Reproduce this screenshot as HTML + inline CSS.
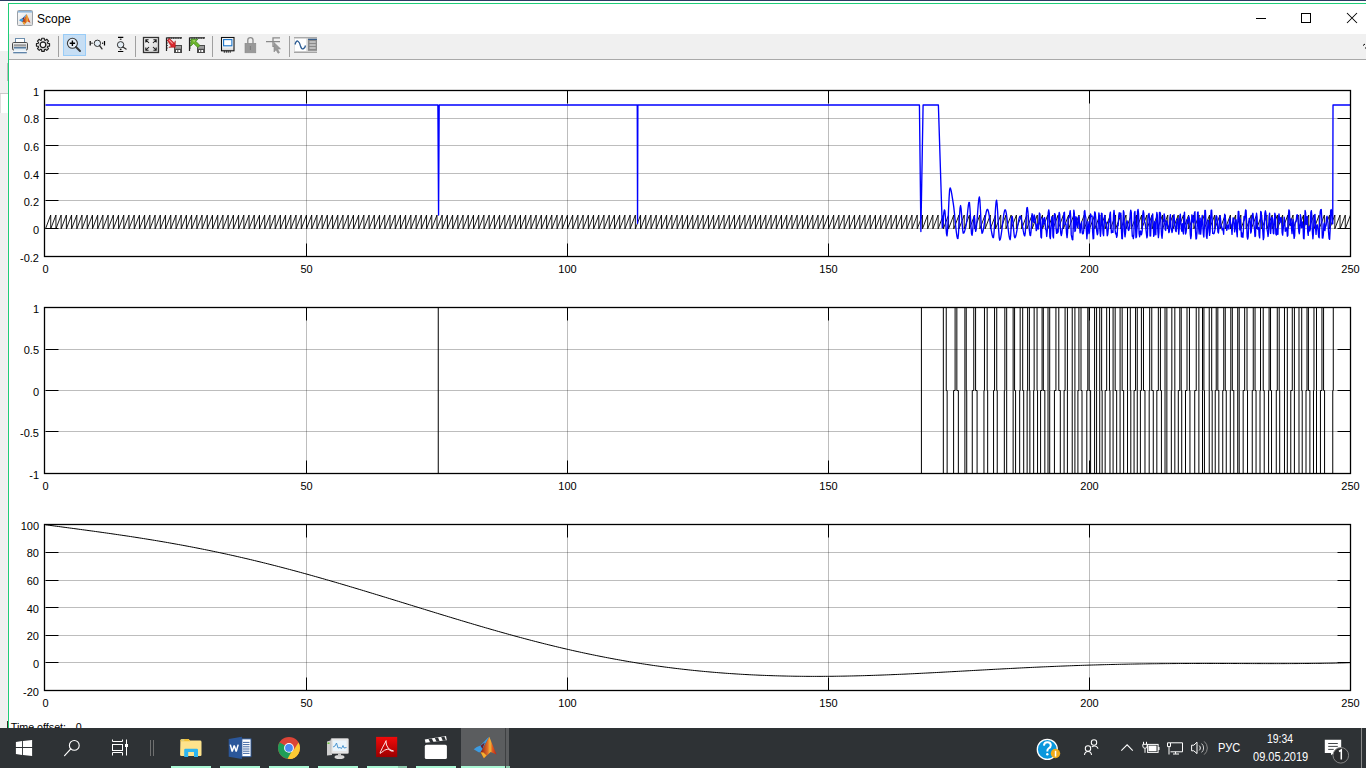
<!DOCTYPE html>
<html><head><meta charset="utf-8"><title>Scope</title>
<style>
*{margin:0;padding:0;box-sizing:border-box}
html,body{width:1366px;height:768px;overflow:hidden;background:#fff;font-family:"Liberation Sans",sans-serif;position:relative}
.abs{position:absolute}
#topstrip{left:0;top:0;width:1366px;height:1px;background:#2b3d63}
#lstrip{left:0;top:1px;width:8px;height:727px;background:#fff}
#win{left:8px;top:3px;width:1358px;height:725px;border-left:1px solid #1ecd78;border-top:1px solid #1ecd78;background:#fff}
#title{left:37px;top:12px;font-size:12px;color:#000}
#toolbar{left:9px;top:34px;width:1357px;height:26px;background:#f0f0f0;border-bottom:1px solid #a9a9a9}
.yl{position:absolute;right:1327px;font-size:11px;line-height:13px;color:#000;text-align:right;white-space:nowrap}
.xl{position:absolute;width:30px;font-size:11px;line-height:13px;color:#000;text-align:center}
#plots{position:absolute;left:0;top:0}
#toffset{left:10.8px;top:720.6px;font-size:10.7px;color:#000;white-space:pre}
#toff0{left:75.8px;top:720.6px;font-size:10.7px;color:#000}
#taskbar{left:0;top:728px;width:1366px;height:40px;background:#2e3235}
.tbtxt{position:absolute;color:#fff;font-size:12px;white-space:nowrap}
</style></head><body>
<div class="abs" id="topstrip"></div>
<div class="abs" id="lstrip">
 <div class="abs" style="left:0;top:50px;width:8px;height:42px;background:#f0f0f0"></div>
 <div class="abs" style="left:7px;top:62px;width:1px;height:18px;background:#bbb"></div>
 <div class="abs" style="left:0;top:92px;width:8px;height:1px;background:#c9c9c9"></div>
 <div class="abs" style="left:0;top:93px;width:1px;height:19px;background:#ddd"></div>
 <div class="abs" style="left:0;top:112px;width:8px;height:616px;background:#f0f0f0"></div>
 <div class="abs" style="left:7px;top:112px;width:1px;height:616px;background:#fbeff4"></div>
</div>
<div class="abs" id="win"></div>
<div class="abs" id="title">Scope</div>
<div class="abs" id="toolbar"></div>
<svg id="plots" width="1366" height="728" viewBox="0 0 1366 728">
<rect x="306" y="90.5" width="1" height="166.0" fill="#000" fill-opacity="0.26"/>
<rect x="567" y="90.5" width="1" height="166.0" fill="#000" fill-opacity="0.26"/>
<rect x="828" y="90.5" width="1" height="166.0" fill="#000" fill-opacity="0.26"/>
<rect x="1089" y="90.5" width="1" height="166.0" fill="#000" fill-opacity="0.26"/>
<rect x="45.5" y="118" width="1305.0" height="1" fill="#000" fill-opacity="0.26"/>
<rect x="45.5" y="145" width="1305.0" height="1" fill="#000" fill-opacity="0.26"/>
<rect x="45.5" y="173" width="1305.0" height="1" fill="#000" fill-opacity="0.26"/>
<rect x="45.5" y="200" width="1305.0" height="1" fill="#000" fill-opacity="0.26"/>
<rect x="45.5" y="228" width="1305.0" height="1" fill="#000" fill-opacity="0.26"/>
<path d="M306.5,90.5 V103.5 M306.5,256.5 V243.5 M567.5,90.5 V103.5 M567.5,256.5 V243.5 M828.5,90.5 V103.5 M828.5,256.5 V243.5 M1089.5,90.5 V103.5 M1089.5,256.5 V243.5 M45.5,118.5 H58.5 M1350.5,118.5 H1337.5 M45.5,145.5 H58.5 M1350.5,145.5 H1337.5 M45.5,173.5 H58.5 M1350.5,173.5 H1337.5 M45.5,200.5 H58.5 M1350.5,200.5 H1337.5 M45.5,228.5 H58.5 M1350.5,228.5 H1337.5" stroke="#000" stroke-width="1" fill="none"/>
<rect x="306" y="307.5" width="1" height="166.0" fill="#000" fill-opacity="0.26"/>
<rect x="567" y="307.5" width="1" height="166.0" fill="#000" fill-opacity="0.26"/>
<rect x="828" y="307.5" width="1" height="166.0" fill="#000" fill-opacity="0.26"/>
<rect x="1089" y="307.5" width="1" height="166.0" fill="#000" fill-opacity="0.26"/>
<rect x="45.5" y="349" width="1305.0" height="1" fill="#000" fill-opacity="0.26"/>
<rect x="45.5" y="390" width="1305.0" height="1" fill="#000" fill-opacity="0.26"/>
<rect x="45.5" y="431" width="1305.0" height="1" fill="#000" fill-opacity="0.26"/>
<path d="M306.5,307.5 V320.5 M306.5,473.5 V460.5 M567.5,307.5 V320.5 M567.5,473.5 V460.5 M828.5,307.5 V320.5 M828.5,473.5 V460.5 M1089.5,307.5 V320.5 M1089.5,473.5 V460.5 M45.5,349.5 H58.5 M1350.5,349.5 H1337.5 M45.5,390.5 H58.5 M1350.5,390.5 H1337.5 M45.5,431.5 H58.5 M1350.5,431.5 H1337.5" stroke="#000" stroke-width="1" fill="none"/>
<rect x="306" y="524.5" width="1" height="166.0" fill="#000" fill-opacity="0.26"/>
<rect x="567" y="524.5" width="1" height="166.0" fill="#000" fill-opacity="0.26"/>
<rect x="828" y="524.5" width="1" height="166.0" fill="#000" fill-opacity="0.26"/>
<rect x="1089" y="524.5" width="1" height="166.0" fill="#000" fill-opacity="0.26"/>
<rect x="45.5" y="552" width="1305.0" height="1" fill="#000" fill-opacity="0.26"/>
<rect x="45.5" y="580" width="1305.0" height="1" fill="#000" fill-opacity="0.26"/>
<rect x="45.5" y="607" width="1305.0" height="1" fill="#000" fill-opacity="0.26"/>
<rect x="45.5" y="635" width="1305.0" height="1" fill="#000" fill-opacity="0.26"/>
<rect x="45.5" y="662" width="1305.0" height="1" fill="#000" fill-opacity="0.26"/>
<path d="M306.5,524.5 V537.5 M306.5,690.5 V677.5 M567.5,524.5 V537.5 M567.5,690.5 V677.5 M828.5,524.5 V537.5 M828.5,690.5 V677.5 M1089.5,524.5 V537.5 M1089.5,690.5 V677.5 M45.5,552.5 H58.5 M1350.5,552.5 H1337.5 M45.5,580.5 H58.5 M1350.5,580.5 H1337.5 M45.5,607.5 H58.5 M1350.5,607.5 H1337.5 M45.5,635.5 H58.5 M1350.5,635.5 H1337.5 M45.5,662.5 H58.5 M1350.5,662.5 H1337.5" stroke="#000" stroke-width="1" fill="none"/>
<path d="M45.50,228.83 L50.71,215.00 L50.72,228.83 L55.93,215.00 L55.94,228.83 L61.15,215.00 L61.16,228.83 L66.37,215.00 L66.38,228.83 L71.59,215.00 L71.60,228.83 L76.81,215.00 L76.82,228.83 L82.03,215.00 L82.04,228.83 L87.25,215.00 L87.26,228.83 L92.47,215.00 L92.48,228.83 L97.69,215.00 L97.70,228.83 L102.91,215.00 L102.92,228.83 L108.13,215.00 L108.14,228.83 L113.35,215.00 L113.36,228.83 L118.57,215.00 L118.58,228.83 L123.79,215.00 L123.80,228.83 L129.01,215.00 L129.02,228.83 L134.23,215.00 L134.24,228.83 L139.45,215.00 L139.46,228.83 L144.67,215.00 L144.68,228.83 L149.89,215.00 L149.90,228.83 L155.11,215.00 L155.12,228.83 L160.33,215.00 L160.34,228.83 L165.55,215.00 L165.56,228.83 L170.77,215.00 L170.78,228.83 L175.99,215.00 L176.00,228.83 L181.21,215.00 L181.22,228.83 L186.43,215.00 L186.44,228.83 L191.65,215.00 L191.66,228.83 L196.87,215.00 L196.88,228.83 L202.09,215.00 L202.10,228.83 L207.31,215.00 L207.32,228.83 L212.53,215.00 L212.54,228.83 L217.75,215.00 L217.76,228.83 L222.97,215.00 L222.98,228.83 L228.19,215.00 L228.20,228.83 L233.41,215.00 L233.42,228.83 L238.63,215.00 L238.64,228.83 L243.85,215.00 L243.86,228.83 L249.07,215.00 L249.08,228.83 L254.29,215.00 L254.30,228.83 L259.51,215.00 L259.52,228.83 L264.73,215.00 L264.74,228.83 L269.95,215.00 L269.96,228.83 L275.17,215.00 L275.18,228.83 L280.39,215.00 L280.40,228.83 L285.61,215.00 L285.62,228.83 L290.83,215.00 L290.84,228.83 L296.05,215.00 L296.06,228.83 L301.27,215.00 L301.28,228.83 L306.49,215.00 L306.50,228.83 L311.71,215.00 L311.72,228.83 L316.93,215.00 L316.94,228.83 L322.15,215.00 L322.16,228.83 L327.37,215.00 L327.38,228.83 L332.59,215.00 L332.60,228.83 L337.81,215.00 L337.82,228.83 L343.03,215.00 L343.04,228.83 L348.25,215.00 L348.26,228.83 L353.47,215.00 L353.48,228.83 L358.69,215.00 L358.70,228.83 L363.91,215.00 L363.92,228.83 L369.13,215.00 L369.14,228.83 L374.35,215.00 L374.36,228.83 L379.57,215.00 L379.58,228.83 L384.79,215.00 L384.80,228.83 L390.01,215.00 L390.02,228.83 L395.23,215.00 L395.24,228.83 L400.45,215.00 L400.46,228.83 L405.67,215.00 L405.68,228.83 L410.89,215.00 L410.90,228.83 L416.11,215.00 L416.12,228.83 L421.33,215.00 L421.34,228.83 L426.55,215.00 L426.56,228.83 L431.77,215.00 L431.78,228.83 L436.99,215.00 L437.00,228.83 L442.21,215.00 L442.22,228.83 L447.43,215.00 L447.44,228.83 L452.65,215.00 L452.66,228.83 L457.87,215.00 L457.88,228.83 L463.09,215.00 L463.10,228.83 L468.31,215.00 L468.32,228.83 L473.53,215.00 L473.54,228.83 L478.75,215.00 L478.76,228.83 L483.97,215.00 L483.98,228.83 L489.19,215.00 L489.20,228.83 L494.41,215.00 L494.42,228.83 L499.63,215.00 L499.64,228.83 L504.85,215.00 L504.86,228.83 L510.07,215.00 L510.08,228.83 L515.29,215.00 L515.30,228.83 L520.51,215.00 L520.52,228.83 L525.73,215.00 L525.74,228.83 L530.95,215.00 L530.96,228.83 L536.17,215.00 L536.18,228.83 L541.39,215.00 L541.40,228.83 L546.61,215.00 L546.62,228.83 L551.83,215.00 L551.84,228.83 L557.05,215.00 L557.06,228.83 L562.27,215.00 L562.28,228.83 L567.49,215.00 L567.50,228.83 L572.71,215.00 L572.72,228.83 L577.93,215.00 L577.94,228.83 L583.15,215.00 L583.16,228.83 L588.37,215.00 L588.38,228.83 L593.59,215.00 L593.60,228.83 L598.81,215.00 L598.82,228.83 L604.03,215.00 L604.04,228.83 L609.25,215.00 L609.26,228.83 L614.47,215.00 L614.48,228.83 L619.69,215.00 L619.70,228.83 L624.91,215.00 L624.92,228.83 L630.13,215.00 L630.14,228.83 L635.35,215.00 L635.36,228.83 L640.57,215.00 L640.58,228.83 L645.79,215.00 L645.80,228.83 L651.01,215.00 L651.02,228.83 L656.23,215.00 L656.24,228.83 L661.45,215.00 L661.46,228.83 L666.67,215.00 L666.68,228.83 L671.89,215.00 L671.90,228.83 L677.11,215.00 L677.12,228.83 L682.33,215.00 L682.34,228.83 L687.55,215.00 L687.56,228.83 L692.77,215.00 L692.78,228.83 L697.99,215.00 L698.00,228.83 L703.21,215.00 L703.22,228.83 L708.43,215.00 L708.44,228.83 L713.65,215.00 L713.66,228.83 L718.87,215.00 L718.88,228.83 L724.09,215.00 L724.10,228.83 L729.31,215.00 L729.32,228.83 L734.53,215.00 L734.54,228.83 L739.75,215.00 L739.76,228.83 L744.97,215.00 L744.98,228.83 L750.19,215.00 L750.20,228.83 L755.41,215.00 L755.42,228.83 L760.63,215.00 L760.64,228.83 L765.85,215.00 L765.86,228.83 L771.07,215.00 L771.08,228.83 L776.29,215.00 L776.30,228.83 L781.51,215.00 L781.52,228.83 L786.73,215.00 L786.74,228.83 L791.95,215.00 L791.96,228.83 L797.17,215.00 L797.18,228.83 L802.39,215.00 L802.40,228.83 L807.61,215.00 L807.62,228.83 L812.83,215.00 L812.84,228.83 L818.05,215.00 L818.06,228.83 L823.27,215.00 L823.28,228.83 L828.49,215.00 L828.50,228.83 L833.71,215.00 L833.72,228.83 L838.93,215.00 L838.94,228.83 L844.15,215.00 L844.16,228.83 L849.37,215.00 L849.38,228.83 L854.59,215.00 L854.60,228.83 L859.81,215.00 L859.82,228.83 L865.03,215.00 L865.04,228.83 L870.25,215.00 L870.26,228.83 L875.47,215.00 L875.48,228.83 L880.69,215.00 L880.70,228.83 L885.91,215.00 L885.92,228.83 L891.13,215.00 L891.14,228.83 L896.35,215.00 L896.36,228.83 L901.57,215.00 L901.58,228.83 L906.79,215.00 L906.80,228.83 L912.01,215.00 L912.02,228.83 L917.23,215.00 L917.24,228.83 L922.45,215.00 L922.46,228.83 L927.67,215.00 L927.68,228.83 L932.89,215.00 L932.90,228.83 L938.11,215.00 L938.12,228.83 L943.33,215.00 L943.34,228.83 L948.55,215.00 L948.56,228.83 L953.77,215.00 L953.78,228.83 L958.99,215.00 L959.00,228.83 L964.21,215.00 L964.22,228.83 L969.43,215.00 L969.44,228.83 L974.65,215.00 L974.66,228.83 L979.87,215.00 L979.88,228.83 L985.09,215.00 L985.10,228.83 L990.31,215.00 L990.32,228.83 L995.53,215.00 L995.54,228.83 L1000.75,215.00 L1000.76,228.83 L1005.97,215.00 L1005.98,228.83 L1011.19,215.00 L1011.20,228.83 L1016.41,215.00 L1016.42,228.83 L1021.63,215.00 L1021.64,228.83 L1026.85,215.00 L1026.86,228.83 L1032.07,215.00 L1032.08,228.83 L1037.29,215.00 L1037.30,228.83 L1042.51,215.00 L1042.52,228.83 L1047.73,215.00 L1047.74,228.83 L1052.95,215.00 L1052.96,228.83 L1058.17,215.00 L1058.18,228.83 L1063.39,215.00 L1063.40,228.83 L1068.61,215.00 L1068.62,228.83 L1073.83,215.00 L1073.84,228.83 L1079.05,215.00 L1079.06,228.83 L1084.27,215.00 L1084.28,228.83 L1089.49,215.00 L1089.50,228.83 L1094.71,215.00 L1094.72,228.83 L1099.93,215.00 L1099.94,228.83 L1105.15,215.00 L1105.16,228.83 L1110.37,215.00 L1110.38,228.83 L1115.59,215.00 L1115.60,228.83 L1120.81,215.00 L1120.82,228.83 L1126.03,215.00 L1126.04,228.83 L1131.25,215.00 L1131.26,228.83 L1136.47,215.00 L1136.48,228.83 L1141.69,215.00 L1141.70,228.83 L1146.91,215.00 L1146.92,228.83 L1152.13,215.00 L1152.14,228.83 L1157.35,215.00 L1157.36,228.83 L1162.57,215.00 L1162.58,228.83 L1167.79,215.00 L1167.80,228.83 L1173.01,215.00 L1173.02,228.83 L1178.23,215.00 L1178.24,228.83 L1183.45,215.00 L1183.46,228.83 L1188.67,215.00 L1188.68,228.83 L1193.89,215.00 L1193.90,228.83 L1199.11,215.00 L1199.12,228.83 L1204.33,215.00 L1204.34,228.83 L1209.55,215.00 L1209.56,228.83 L1214.77,215.00 L1214.78,228.83 L1219.99,215.00 L1220.00,228.83 L1225.21,215.00 L1225.22,228.83 L1230.43,215.00 L1230.44,228.83 L1235.65,215.00 L1235.66,228.83 L1240.87,215.00 L1240.88,228.83 L1246.09,215.00 L1246.10,228.83 L1251.31,215.00 L1251.32,228.83 L1256.53,215.00 L1256.54,228.83 L1261.75,215.00 L1261.76,228.83 L1266.97,215.00 L1266.98,228.83 L1272.19,215.00 L1272.20,228.83 L1277.41,215.00 L1277.42,228.83 L1282.63,215.00 L1282.64,228.83 L1287.85,215.00 L1287.86,228.83 L1293.07,215.00 L1293.08,228.83 L1298.29,215.00 L1298.30,228.83 L1303.51,215.00 L1303.52,228.83 L1308.73,215.00 L1308.74,228.83 L1313.95,215.00 L1313.96,228.83 L1319.17,215.00 L1319.18,228.83 L1324.39,215.00 L1324.40,228.83 L1329.61,215.00 L1329.62,228.83 L1334.83,215.00 L1334.84,228.83 L1340.05,215.00 L1340.06,228.83 L1345.27,215.00 L1345.28,228.83 L1350.49,215.00 L1350.50,228.83" stroke="#000" stroke-width="0.9" fill="none"/>
<path d="M45.50,105.03 L437.89,105.03 L438.57,215.00 L439.19,105.03 L637.24,105.03 L637.55,223.30 L637.87,105.03 L919.43,105.03 L920.89,231.60 L923.09,105.03 L938.38,105.03 L942.30,227.90 L942.82,225.71 L943.34,217.67 L943.86,212.38 L944.38,209.84 L944.91,210.88 L945.43,217.40 L945.95,226.21 L946.47,233.60 L946.99,235.87 L947.52,231.05 L948.04,221.29 L948.56,209.34 L949.08,197.98 L949.60,189.96 L950.13,187.84 L950.65,188.81 L951.17,190.83 L951.69,193.61 L952.21,196.82 L952.74,200.16 L953.26,203.35 L953.78,207.14 L954.30,211.89 L954.82,217.19 L955.35,222.66 L955.87,227.90 L956.39,232.52 L956.91,236.12 L957.43,238.32 L957.96,238.48 L958.48,233.56 L959.00,224.92 L959.52,215.45 L960.04,208.03 L960.57,205.55 L961.09,208.67 L961.61,215.15 L962.13,222.83 L962.65,229.55 L963.18,233.14 L963.70,233.07 L964.22,232.15 L964.74,230.69 L965.26,228.86 L965.79,226.85 L966.31,224.39 L966.83,220.19 L967.35,214.96 L967.87,209.62 L968.40,205.11 L968.92,202.34 L969.44,202.65 L969.96,208.44 L970.48,217.52 L971.01,226.97 L971.53,233.86 L972.05,235.36 L972.57,231.56 L973.09,225.24 L973.62,219.15 L974.14,216.04 L974.66,219.92 L975.18,228.18 L975.70,231.43 L976.23,229.00 L976.75,223.94 L977.27,217.33 L977.79,210.25 L978.31,203.77 L978.84,198.96 L979.36,196.92 L979.88,200.17 L980.40,208.95 L980.92,219.76 L981.45,229.05 L981.97,233.29 L982.49,232.74 L983.01,231.08 L983.53,228.57 L984.06,225.48 L984.58,222.07 L985.10,218.59 L985.62,215.32 L986.14,212.51 L986.67,210.42 L987.19,209.31 L987.71,209.43 L988.23,210.75 L988.75,213.04 L989.28,216.06 L989.80,219.57 L990.32,223.33 L990.84,227.11 L991.36,230.66 L991.89,233.75 L992.41,236.13 L992.93,237.58 L993.45,237.66 L993.97,233.57 L994.50,225.98 L995.02,216.86 L995.54,208.19 L996.06,201.94 L996.58,200.08 L997.11,203.78 L997.63,211.47 L998.15,221.05 L998.67,230.42 L999.19,237.51 L999.72,240.20 L1000.24,239.38 L1000.76,237.23 L1001.28,234.06 L1001.80,230.20 L1002.33,225.94 L1002.85,221.60 L1003.37,217.51 L1003.89,213.97 L1004.41,211.30 L1004.94,209.81 L1005.46,209.84 L1005.98,211.57 L1006.50,214.66 L1007.02,218.70 L1007.55,223.26 L1008.07,227.95 L1008.59,232.35 L1009.11,236.05 L1009.63,238.63 L1010.16,239.70 L1010.68,235.58 L1011.20,225.89 L1011.72,217.52 L1012.24,216.47 L1012.77,220.02 L1013.29,225.64 L1013.81,231.63 L1014.33,236.27 L1014.85,237.90 L1015.38,237.21 L1015.90,235.56 L1016.42,233.17 L1016.94,230.30 L1017.46,227.17 L1017.99,224.03 L1018.51,221.11 L1019.03,218.64 L1019.55,216.87 L1020.07,216.04 L1020.60,216.42 L1021.12,218.07 L1021.64,220.66 L1022.16,223.81 L1022.68,227.20 L1023.21,230.46 L1023.73,233.25 L1024.25,235.21 L1024.77,236.00 L1025.29,232.55 L1025.82,223.98 L1026.34,214.37 L1026.86,207.79 L1027.38,207.54 L1027.90,211.49 L1028.43,217.75 L1028.95,224.81 L1029.47,231.15 L1029.99,235.25 L1030.51,235.58 L1031.04,231.35 L1031.56,223.65 L1032.08,213.71 L1032.60,216.03 L1033.12,220.71 L1033.65,222.37 L1034.17,214.96 L1034.69,216.55 L1035.21,219.67 L1035.73,224.31 L1036.26,230.66 L1036.78,229.38 L1037.30,224.00 L1037.82,227.85 L1038.34,229.06 L1038.87,220.90 L1039.39,213.01 L1039.91,213.97 L1040.43,224.79 L1040.95,237.21 L1041.48,237.92 L1042.00,224.40 L1042.52,217.98 L1043.04,224.71 L1043.56,223.22 L1044.09,218.76 L1044.61,217.51 L1045.13,222.43 L1045.65,229.30 L1046.17,230.22 L1046.70,236.45 L1047.22,231.24 L1047.74,220.65 L1048.26,212.40 L1048.78,209.94 L1049.31,213.28 L1049.83,236.79 L1050.35,238.67 L1050.87,229.60 L1051.39,224.76 L1051.92,216.77 L1052.44,217.00 L1052.96,236.13 L1053.48,237.93 L1054.00,222.48 L1054.53,213.68 L1055.05,213.98 L1055.57,217.13 L1056.09,228.50 L1056.61,233.39 L1057.14,229.47 L1057.66,232.72 L1058.18,231.68 L1058.70,216.10 L1059.22,212.40 L1059.75,214.72 L1060.27,226.78 L1060.79,233.50 L1061.31,235.49 L1061.83,233.39 L1062.36,228.40 L1062.88,227.90 L1063.40,220.08 L1063.92,212.66 L1064.44,212.25 L1064.97,224.43 L1065.49,223.01 L1066.01,224.54 L1066.53,233.38 L1067.05,237.69 L1067.58,232.47 L1068.10,218.58 L1068.62,217.79 L1069.14,217.84 L1069.66,213.71 L1070.19,210.68 L1070.71,216.45 L1071.23,234.64 L1071.75,237.05 L1072.27,239.59 L1072.80,239.76 L1073.32,223.58 L1073.84,210.07 L1074.36,213.38 L1074.88,231.48 L1075.41,230.65 L1075.93,216.79 L1076.45,217.95 L1076.97,224.92 L1077.49,227.71 L1078.02,223.26 L1078.54,216.31 L1079.06,216.85 L1079.58,226.30 L1080.10,232.91 L1080.63,227.98 L1081.15,224.07 L1081.67,221.92 L1082.19,232.76 L1082.71,233.85 L1083.24,233.68 L1083.76,230.16 L1084.28,211.61 L1084.80,210.52 L1085.32,215.75 L1085.85,217.59 L1086.37,230.39 L1086.89,238.75 L1087.41,232.20 L1087.93,221.55 L1088.46,225.57 L1088.98,233.67 L1089.50,232.06 L1090.02,222.17 L1090.54,213.87 L1091.07,215.49 L1091.59,216.50 L1092.11,216.04 L1092.63,231.79 L1093.15,238.84 L1093.68,238.43 L1094.20,219.02 L1094.72,211.85 L1095.24,213.09 L1095.76,218.08 L1096.29,226.68 L1096.81,231.69 L1097.33,234.72 L1097.85,233.33 L1098.37,222.30 L1098.90,212.88 L1099.42,216.68 L1099.94,230.67 L1100.46,236.30 L1100.98,229.96 L1101.51,213.21 L1102.03,213.59 L1102.55,223.18 L1103.07,233.60 L1103.59,235.71 L1104.12,224.84 L1104.64,215.37 L1105.16,219.31 L1105.68,222.84 L1106.20,222.53 L1106.73,227.93 L1107.25,235.76 L1107.77,234.34 L1108.29,228.87 L1108.81,221.15 L1109.34,222.17 L1109.86,214.39 L1110.38,212.14 L1110.90,223.87 L1111.42,232.86 L1111.95,230.92 L1112.47,232.33 L1112.99,232.39 L1113.51,215.11 L1114.03,210.33 L1114.56,216.12 L1115.08,229.80 L1115.60,233.94 L1116.12,233.10 L1116.64,237.35 L1117.17,235.61 L1117.69,224.72 L1118.21,225.57 L1118.73,215.76 L1119.25,212.63 L1119.78,217.04 L1120.30,214.97 L1120.82,213.06 L1121.34,228.30 L1121.86,238.53 L1122.39,238.71 L1122.91,224.84 L1123.43,210.78 L1123.95,212.72 L1124.47,231.51 L1125.00,236.80 L1125.52,232.84 L1126.04,224.31 L1126.56,222.18 L1127.08,220.79 L1127.61,222.93 L1128.13,229.22 L1128.65,230.47 L1129.17,229.01 L1129.69,225.46 L1130.22,213.89 L1130.74,210.12 L1131.26,212.14 L1131.78,226.67 L1132.30,236.32 L1132.83,235.79 L1133.35,238.57 L1133.87,234.70 L1134.39,213.16 L1134.91,211.38 L1135.44,224.30 L1135.96,237.75 L1136.48,236.88 L1137.00,228.37 L1137.52,211.37 L1138.05,209.47 L1138.57,213.63 L1139.09,233.52 L1139.61,236.72 L1140.13,231.44 L1140.66,231.01 L1141.18,234.82 L1141.70,233.90 L1142.22,230.66 L1142.74,214.51 L1143.27,210.79 L1143.79,212.86 L1144.31,221.34 L1144.83,222.15 L1145.35,224.35 L1145.88,228.95 L1146.40,233.75 L1146.92,237.86 L1147.44,235.39 L1147.96,218.54 L1148.49,214.54 L1149.01,213.44 L1149.53,217.94 L1150.05,236.10 L1150.57,235.97 L1151.10,224.28 L1151.62,217.98 L1152.14,216.84 L1152.66,213.86 L1153.18,222.63 L1153.71,236.39 L1154.23,234.86 L1154.75,221.73 L1155.27,227.05 L1155.79,234.74 L1156.32,218.96 L1156.84,212.46 L1157.36,215.02 L1157.88,231.08 L1158.40,237.62 L1158.93,232.57 L1159.45,212.66 L1159.97,212.29 L1160.49,214.08 L1161.01,225.93 L1161.54,235.25 L1162.06,238.24 L1162.58,232.21 L1163.10,220.00 L1163.62,221.44 L1164.15,213.89 L1164.67,216.61 L1165.19,229.71 L1165.71,230.46 L1166.23,224.77 L1166.76,220.60 L1167.28,223.40 L1167.80,226.54 L1168.32,227.54 L1168.84,232.62 L1169.37,231.43 L1169.89,217.50 L1170.41,214.72 L1170.93,227.35 L1171.45,229.72 L1171.98,232.49 L1172.50,230.77 L1173.02,219.99 L1173.54,216.81 L1174.06,214.67 L1174.59,223.18 L1175.11,226.80 L1175.63,230.82 L1176.15,231.61 L1176.67,222.81 L1177.20,219.49 L1177.72,218.53 L1178.24,227.29 L1178.76,234.18 L1179.28,228.02 L1179.81,216.46 L1180.33,214.13 L1180.85,222.55 L1181.37,229.36 L1181.89,231.22 L1182.42,223.68 L1182.94,231.41 L1183.46,233.96 L1183.98,216.42 L1184.50,212.15 L1185.03,226.43 L1185.55,234.05 L1186.07,232.39 L1186.59,227.81 L1187.11,219.75 L1187.64,223.68 L1188.16,222.23 L1188.68,216.25 L1189.20,217.97 L1189.72,221.08 L1190.25,233.84 L1190.77,238.68 L1191.29,235.52 L1191.81,214.91 L1192.33,215.92 L1192.86,221.33 L1193.38,222.75 L1193.90,220.14 L1194.42,213.18 L1194.94,211.62 L1195.47,230.20 L1195.99,238.98 L1196.51,238.53 L1197.03,231.98 L1197.55,212.75 L1198.08,211.98 L1198.60,226.73 L1199.12,233.98 L1199.64,221.54 L1200.16,218.16 L1200.69,234.12 L1201.21,228.13 L1201.73,219.80 L1202.25,215.42 L1202.77,224.75 L1203.30,233.82 L1203.82,236.98 L1204.34,227.40 L1204.86,210.48 L1205.38,210.36 L1205.91,220.09 L1206.43,236.10 L1206.95,238.39 L1207.47,231.89 L1207.99,220.56 L1208.52,220.25 L1209.04,228.47 L1209.56,235.43 L1210.08,231.91 L1210.60,219.15 L1211.13,210.42 L1211.65,210.10 L1212.17,220.03 L1212.69,233.38 L1213.21,233.12 L1213.74,233.80 L1214.26,233.12 L1214.78,230.44 L1215.30,227.88 L1215.82,217.84 L1216.35,215.60 L1216.87,216.86 L1217.39,223.23 L1217.91,231.97 L1218.43,233.09 L1218.96,227.39 L1219.48,220.88 L1220.00,215.58 L1220.52,218.75 L1221.04,227.01 L1221.57,225.90 L1222.09,229.80 L1222.61,228.37 L1223.13,230.40 L1223.65,234.28 L1224.18,221.55 L1224.70,214.20 L1225.22,216.45 L1225.74,221.70 L1226.26,227.27 L1226.79,230.36 L1227.31,227.61 L1227.83,225.01 L1228.35,225.75 L1228.87,228.97 L1229.40,221.48 L1229.92,217.99 L1230.44,222.01 L1230.96,224.61 L1231.48,228.00 L1232.01,234.44 L1232.53,225.64 L1233.05,217.91 L1233.57,218.05 L1234.09,223.22 L1234.62,231.89 L1235.14,228.89 L1235.66,219.50 L1236.18,219.91 L1236.70,231.59 L1237.23,236.77 L1237.75,222.98 L1238.27,211.36 L1238.79,211.50 L1239.31,220.74 L1239.84,229.90 L1240.36,218.92 L1240.88,226.66 L1241.40,236.80 L1241.92,232.95 L1242.45,236.33 L1242.97,237.33 L1243.49,228.45 L1244.01,216.42 L1244.53,219.87 L1245.06,215.23 L1245.58,210.02 L1246.10,210.52 L1246.62,222.48 L1247.14,236.62 L1247.67,239.07 L1248.19,236.90 L1248.71,224.45 L1249.23,218.43 L1249.75,218.38 L1250.28,221.81 L1250.80,233.10 L1251.32,231.42 L1251.84,220.27 L1252.36,214.71 L1252.89,213.32 L1253.41,217.67 L1253.93,224.66 L1254.45,228.63 L1254.97,236.58 L1255.50,235.99 L1256.02,218.95 L1256.54,213.29 L1257.06,217.21 L1257.58,229.14 L1258.11,227.37 L1258.63,227.47 L1259.15,235.54 L1259.67,237.85 L1260.19,224.31 L1260.72,211.32 L1261.24,212.30 L1261.76,219.36 L1262.28,221.16 L1262.80,231.35 L1263.33,239.61 L1263.85,237.32 L1264.37,222.09 L1264.89,213.12 L1265.41,210.81 L1265.94,213.32 L1266.46,223.71 L1266.98,228.88 L1267.50,231.76 L1268.02,236.45 L1268.55,232.91 L1269.07,216.75 L1269.59,213.27 L1270.11,226.48 L1270.63,233.45 L1271.16,226.46 L1271.68,217.34 L1272.20,217.41 L1272.72,219.68 L1273.24,233.03 L1273.77,233.74 L1274.29,223.59 L1274.81,213.16 L1275.33,215.30 L1275.85,233.90 L1276.38,235.08 L1276.90,228.86 L1277.42,234.09 L1277.94,234.33 L1278.46,217.84 L1278.99,213.88 L1279.51,218.36 L1280.03,222.55 L1280.55,217.96 L1281.07,217.71 L1281.60,219.41 L1282.12,232.62 L1282.64,235.17 L1283.16,229.28 L1283.68,224.66 L1284.21,217.06 L1284.73,221.02 L1285.25,231.26 L1285.77,230.84 L1286.29,228.10 L1286.82,227.91 L1287.34,236.22 L1287.86,235.10 L1288.38,215.54 L1288.90,209.88 L1289.43,210.95 L1289.95,223.42 L1290.47,225.41 L1290.99,218.91 L1291.51,228.63 L1292.04,233.69 L1292.56,223.56 L1293.08,219.45 L1293.60,232.56 L1294.12,238.44 L1294.65,235.79 L1295.17,222.29 L1295.69,222.39 L1296.21,220.77 L1296.73,215.45 L1297.26,214.71 L1297.78,218.46 L1298.30,222.70 L1298.82,231.72 L1299.34,233.71 L1299.87,227.66 L1300.39,214.76 L1300.91,217.82 L1301.43,227.68 L1301.95,227.21 L1302.48,222.04 L1303.00,225.82 L1303.52,238.30 L1304.04,238.82 L1304.56,225.69 L1305.09,210.43 L1305.61,212.67 L1306.13,224.34 L1306.65,219.59 L1307.17,216.35 L1307.70,231.92 L1308.22,235.44 L1308.74,227.25 L1309.26,226.52 L1309.78,230.98 L1310.31,229.05 L1310.83,212.50 L1311.35,210.73 L1311.87,216.00 L1312.39,232.40 L1312.92,238.76 L1313.44,233.04 L1313.96,221.84 L1314.48,214.91 L1315.00,214.45 L1315.53,227.24 L1316.05,234.34 L1316.57,226.39 L1317.09,224.60 L1317.61,226.54 L1318.14,230.32 L1318.66,236.62 L1319.18,237.83 L1319.70,220.82 L1320.22,211.64 L1320.75,209.65 L1321.27,209.55 L1321.79,219.32 L1322.31,237.98 L1322.83,238.16 L1323.36,234.72 L1323.88,224.72 L1324.40,223.00 L1324.92,230.56 L1325.44,226.14 L1325.97,226.02 L1326.49,217.98 L1327.01,216.11 L1327.53,219.14 L1328.05,223.46 L1328.58,232.64 L1329.10,238.45 L1329.62,239.34 L1330.14,229.83 L1330.66,210.49 L1331.19,209.58 L1331.71,211.46 L1332.23,223.82 L1332.75,223.82 L1333.01,105.03 L1350.50,105.03" stroke="#0000ff" stroke-width="1.35" fill="none" stroke-linejoin="round"/>
<path d="M45.50,473.50 L438.25,473.50 L438.25,307.50 L921.42,307.50 L921.42,473.50 L943.34,473.50 L943.34,307.50 L946.24,307.50 L946.24,390.50 L947.14,390.50 L947.14,473.50 L953.60,473.50 L953.60,390.50 L955.10,390.50 L955.10,307.50 L956.85,307.50 L956.85,390.50 L958.35,390.50 L958.35,473.50 L964.90,473.50 L964.90,390.50 L964.90,390.50 L964.90,307.50 L966.23,307.50 L966.23,390.50 L966.73,390.50 L966.73,473.50 L972.27,473.50 L972.27,390.50 L973.77,390.50 L973.77,307.50 L975.58,307.50 L975.58,390.50 L977.08,390.50 L977.08,473.50 L983.96,473.50 L983.96,390.50 L984.46,390.50 L984.46,307.50 L987.17,307.50 L987.17,390.50 L987.67,390.50 L987.67,473.50 L993.56,473.50 L993.56,390.50 L994.56,390.50 L994.56,307.50 L996.74,307.50 L996.74,390.50 L997.24,390.50 L997.24,473.50 L1004.33,473.50 L1004.33,390.50 L1004.83,390.50 L1004.83,307.50 L1006.68,307.50 L1006.68,390.50 L1006.68,390.50 L1006.68,473.50 L1013.13,473.50 L1013.13,390.50 L1013.13,390.50 L1013.13,307.50 L1014.59,307.50 L1014.59,390.50 L1015.59,390.50 L1015.59,473.50 L1019.67,473.50 L1019.67,390.50 L1020.17,390.50 L1020.17,307.50 L1022.69,307.50 L1022.69,390.50 L1023.69,390.50 L1023.69,473.50 L1027.14,473.50 L1027.14,390.50 L1027.64,390.50 L1027.64,307.50 L1029.38,307.50 L1029.38,390.50 L1029.88,390.50 L1029.88,473.50 L1033.65,473.50 L1033.65,390.50 L1034.15,390.50 L1034.15,307.50 L1037.06,307.50 L1037.06,390.50 L1037.56,390.50 L1037.56,473.50 L1040.58,473.50 L1040.58,390.50 L1042.08,390.50 L1042.08,307.50 L1043.34,307.50 L1043.34,390.50 L1044.84,390.50 L1044.84,473.50 L1048.00,473.50 L1048.00,390.50 L1048.00,390.50 L1048.00,307.50 L1049.71,307.50 L1049.71,390.50 L1049.71,390.50 L1049.71,473.50 L1054.43,473.50 L1054.43,390.50 L1055.93,390.50 L1055.93,307.50 L1058.81,307.50 L1058.81,390.50 L1060.31,390.50 L1060.31,473.50 L1064.09,473.50 L1064.09,390.50 L1065.09,390.50 L1065.09,307.50 L1067.42,307.50 L1067.42,390.50 L1067.42,390.50 L1067.42,473.50 L1072.22,473.50 L1072.22,390.50 L1072.22,390.50 L1072.22,307.50 L1074.91,307.50 L1074.91,390.50 L1074.91,390.50 L1074.91,473.50 L1077.91,473.50 L1077.91,390.50 L1078.91,390.50 L1078.91,307.50 L1081.00,307.50 L1081.00,390.50 L1082.00,390.50 L1082.00,473.50 L1086.81,473.50 L1086.81,390.50 L1087.81,390.50 L1087.81,307.50 L1089.10,307.50 L1089.10,390.50 L1090.60,390.50 L1090.60,473.50 L1094.59,473.50 L1094.59,390.50 L1094.59,390.50 L1094.59,307.50 L1096.58,307.50 L1096.58,390.50 L1096.58,390.50 L1096.58,473.50 L1099.72,473.50 L1099.72,390.50 L1099.72,390.50 L1099.72,307.50 L1101.65,307.50 L1101.65,390.50 L1102.15,390.50 L1102.15,473.50 L1105.16,473.50 L1105.16,390.50 L1106.66,390.50 L1106.66,307.50 L1109.47,307.50 L1109.47,390.50 L1109.97,390.50 L1109.97,473.50 L1113.09,473.50 L1113.09,390.50 L1113.09,390.50 L1113.09,307.50 L1115.17,307.50 L1115.17,390.50 L1116.67,390.50 L1116.67,473.50 L1120.09,473.50 L1120.09,390.50 L1120.09,390.50 L1120.09,307.50 L1122.15,307.50 L1122.15,390.50 L1123.65,390.50 L1123.65,473.50 L1127.52,473.50 L1127.52,390.50 L1127.52,390.50 L1127.52,307.50 L1130.31,307.50 L1130.31,390.50 L1130.81,390.50 L1130.81,473.50 L1134.07,473.50 L1134.07,390.50 L1135.57,390.50 L1135.57,307.50 L1137.28,307.50 L1137.28,390.50 L1137.28,390.50 L1137.28,473.50 L1140.40,473.50 L1140.40,390.50 L1141.40,390.50 L1141.40,307.50 L1143.48,307.50 L1143.48,390.50 L1144.98,390.50 L1144.98,473.50 L1149.18,473.50 L1149.18,390.50 L1149.68,390.50 L1149.68,307.50 L1151.77,307.50 L1151.77,390.50 L1153.27,390.50 L1153.27,473.50 L1156.83,473.50 L1156.83,390.50 L1158.33,390.50 L1158.33,307.50 L1160.43,307.50 L1160.43,390.50 L1161.43,390.50 L1161.43,473.50 L1165.03,473.50 L1165.03,390.50 L1165.03,390.50 L1165.03,307.50 L1166.87,307.50 L1166.87,390.50 L1166.87,390.50 L1166.87,473.50 L1171.34,473.50 L1171.34,390.50 L1171.84,390.50 L1171.84,307.50 L1174.83,307.50 L1174.83,390.50 L1174.83,390.50 L1174.83,473.50 L1178.30,473.50 L1178.30,390.50 L1179.80,390.50 L1179.80,307.50 L1181.22,307.50 L1181.22,390.50 L1181.72,390.50 L1181.72,473.50 L1185.51,473.50 L1185.51,390.50 L1187.01,390.50 L1187.01,307.50 L1189.44,307.50 L1189.44,390.50 L1189.94,390.50 L1189.94,473.50 L1194.73,473.50 L1194.73,390.50 L1196.23,390.50 L1196.23,307.50 L1198.88,307.50 L1198.88,390.50 L1198.88,390.50 L1198.88,473.50 L1202.50,473.50 L1202.50,390.50 L1202.50,390.50 L1202.50,307.50 L1203.93,307.50 L1203.93,390.50 L1204.43,390.50 L1204.43,473.50 L1209.22,473.50 L1209.22,390.50 L1209.22,390.50 L1209.22,307.50 L1211.68,307.50 L1211.68,390.50 L1212.18,390.50 L1212.18,473.50 L1215.23,473.50 L1215.23,390.50 L1216.23,390.50 L1216.23,307.50 L1217.84,307.50 L1217.84,390.50 L1218.84,390.50 L1218.84,473.50 L1222.74,473.50 L1222.74,390.50 L1223.74,390.50 L1223.74,307.50 L1225.25,307.50 L1225.25,390.50 L1226.25,390.50 L1226.25,473.50 L1230.30,473.50 L1230.30,390.50 L1230.80,390.50 L1230.80,307.50 L1232.30,307.50 L1232.30,390.50 L1233.80,390.50 L1233.80,473.50 L1237.73,473.50 L1237.73,390.50 L1237.73,390.50 L1237.73,307.50 L1239.19,307.50 L1239.19,390.50 L1239.19,390.50 L1239.19,473.50 L1243.17,473.50 L1243.17,390.50 L1244.67,390.50 L1244.67,307.50 L1247.03,307.50 L1247.03,390.50 L1247.53,390.50 L1247.53,473.50 L1252.25,473.50 L1252.25,390.50 L1253.25,390.50 L1253.25,307.50 L1255.05,307.50 L1255.05,390.50 L1256.05,390.50 L1256.05,473.50 L1260.02,473.50 L1260.02,390.50 L1260.52,390.50 L1260.52,307.50 L1263.23,307.50 L1263.23,390.50 L1264.23,390.50 L1264.23,473.50 L1268.60,473.50 L1268.60,390.50 L1269.10,390.50 L1269.10,307.50 L1270.54,307.50 L1270.54,390.50 L1271.54,390.50 L1271.54,473.50 L1276.27,473.50 L1276.27,390.50 L1277.27,390.50 L1277.27,307.50 L1279.20,307.50 L1279.20,390.50 L1279.70,390.50 L1279.70,473.50 L1284.47,473.50 L1284.47,390.50 L1284.47,390.50 L1284.47,307.50 L1287.32,307.50 L1287.32,390.50 L1287.32,390.50 L1287.32,473.50 L1290.78,473.50 L1290.78,390.50 L1292.28,390.50 L1292.28,307.50 L1294.40,307.50 L1294.40,390.50 L1294.40,390.50 L1294.40,473.50 L1298.99,473.50 L1298.99,390.50 L1298.99,390.50 L1298.99,307.50 L1301.71,307.50 L1301.71,390.50 L1302.21,390.50 L1302.21,473.50 L1306.00,473.50 L1306.00,390.50 L1307.00,390.50 L1307.00,307.50 L1308.40,307.50 L1308.40,390.50 L1309.90,390.50 L1309.90,473.50 L1313.47,473.50 L1313.47,390.50 L1313.97,390.50 L1313.97,307.50 L1316.50,307.50 L1316.50,390.50 L1316.50,390.50 L1316.50,473.50 L1320.44,473.50 L1320.44,390.50 L1321.94,390.50 L1321.94,307.50 L1323.57,307.50 L1323.57,390.50 L1324.57,390.50 L1324.57,473.50 L1329.62,473.50 L1332.75,473.50 L1332.75,390.50 L1333.27,390.50 L1333.27,307.50 L1350.50,307.50" stroke="#000" stroke-width="1" fill="none"/>
<path d="M45.50,524.77 L47.68,525.06 L49.86,525.35 L52.04,525.65 L54.21,525.94 L56.39,526.23 L58.57,526.52 L60.75,526.81 L62.93,527.10 L65.11,527.39 L67.29,527.68 L69.46,527.97 L71.64,528.26 L73.82,528.55 L76.00,528.84 L78.18,529.13 L80.36,529.43 L82.54,529.72 L84.72,530.01 L86.89,530.31 L89.07,530.61 L91.25,530.90 L93.43,531.20 L95.61,531.50 L97.79,531.80 L99.97,532.10 L102.14,532.41 L104.32,532.71 L106.50,533.02 L108.68,533.33 L110.86,533.64 L113.04,533.96 L115.22,534.27 L117.39,534.59 L119.57,534.91 L121.75,535.23 L123.93,535.55 L126.11,535.87 L128.29,536.20 L130.47,536.53 L132.65,536.87 L134.82,537.20 L137.00,537.54 L139.18,537.88 L141.36,538.22 L143.54,538.57 L145.72,538.91 L147.90,539.27 L150.07,539.62 L152.25,539.98 L154.43,540.34 L156.61,540.70 L158.79,541.07 L160.97,541.43 L163.15,541.81 L165.32,542.18 L167.50,542.56 L169.68,542.94 L171.86,543.33 L174.04,543.72 L176.22,544.11 L178.40,544.50 L180.58,544.90 L182.75,545.30 L184.93,545.71 L187.11,546.12 L189.29,546.53 L191.47,546.95 L193.65,547.37 L195.83,547.79 L198.00,548.21 L200.18,548.64 L202.36,549.08 L204.54,549.52 L206.72,549.96 L208.90,550.40 L211.08,550.85 L213.25,551.30 L215.43,551.76 L217.61,552.22 L219.79,552.68 L221.97,553.15 L224.15,553.62 L226.33,554.09 L228.51,554.57 L230.68,555.05 L232.86,555.54 L235.04,556.03 L237.22,556.52 L239.40,557.02 L241.58,557.52 L243.76,558.02 L245.93,558.53 L248.11,559.04 L250.29,559.56 L252.47,560.08 L254.65,560.60 L256.83,561.13 L259.01,561.66 L261.18,562.19 L263.36,562.73 L265.54,563.27 L267.72,563.81 L269.90,564.36 L272.08,564.91 L274.26,565.46 L276.43,566.02 L278.61,566.58 L280.79,567.15 L282.97,567.72 L285.15,568.29 L287.33,568.86 L289.51,569.44 L291.69,570.02 L293.86,570.60 L296.04,571.19 L298.22,571.78 L300.40,572.38 L302.58,572.97 L304.76,573.57 L306.94,574.17 L309.11,574.78 L311.29,575.39 L313.47,576.00 L315.65,576.61 L317.83,577.23 L320.01,577.85 L322.19,578.47 L324.36,579.09 L326.54,579.72 L328.72,580.34 L330.90,580.98 L333.08,581.61 L335.26,582.24 L337.44,582.88 L339.62,583.52 L341.79,584.16 L343.97,584.81 L346.15,585.45 L348.33,586.10 L350.51,586.75 L352.69,587.40 L354.87,588.05 L357.04,588.70 L359.22,589.36 L361.40,590.01 L363.58,590.67 L365.76,591.33 L367.94,591.99 L370.12,592.65 L372.29,593.32 L374.47,593.98 L376.65,594.65 L378.83,595.31 L381.01,595.98 L383.19,596.65 L385.37,597.31 L387.55,597.98 L389.72,598.65 L391.90,599.32 L394.08,599.99 L396.26,600.66 L398.44,601.34 L400.62,602.01 L402.80,602.68 L404.97,603.35 L407.15,604.02 L409.33,604.70 L411.51,605.37 L413.69,606.04 L415.87,606.71 L418.05,607.39 L420.22,608.06 L422.40,608.73 L424.58,609.40 L426.76,610.07 L428.94,610.74 L431.12,611.41 L433.30,612.08 L435.47,612.74 L437.65,613.41 L439.83,614.08 L442.01,614.74 L444.19,615.41 L446.37,616.07 L448.55,616.73 L450.73,617.39 L452.90,618.05 L455.08,618.71 L457.26,619.37 L459.44,620.02 L461.62,620.68 L463.80,621.33 L465.98,621.98 L468.15,622.63 L470.33,623.28 L472.51,623.92 L474.69,624.57 L476.87,625.21 L479.05,625.85 L481.23,626.48 L483.40,627.12 L485.58,627.75 L487.76,628.38 L489.94,629.01 L492.12,629.64 L494.30,630.26 L496.48,630.88 L498.66,631.50 L500.83,632.11 L503.01,632.73 L505.19,633.34 L507.37,633.94 L509.55,634.55 L511.73,635.15 L513.91,635.75 L516.08,636.34 L518.26,636.93 L520.44,637.52 L522.62,638.10 L524.80,638.69 L526.98,639.26 L529.16,639.84 L531.33,640.41 L533.51,640.98 L535.69,641.54 L537.87,642.10 L540.05,642.65 L542.23,643.21 L544.41,643.75 L546.59,644.30 L548.76,644.84 L550.94,645.37 L553.12,645.90 L555.30,646.43 L557.48,646.96 L559.66,647.48 L561.84,647.99 L564.01,648.50 L566.19,649.01 L568.37,649.51 L570.55,650.01 L572.73,650.50 L574.91,650.99 L577.09,651.47 L579.26,651.95 L581.44,652.43 L583.62,652.90 L585.80,653.36 L587.98,653.83 L590.16,654.28 L592.34,654.73 L594.52,655.18 L596.69,655.62 L598.87,656.06 L601.05,656.49 L603.23,656.92 L605.41,657.35 L607.59,657.76 L609.77,658.18 L611.94,658.59 L614.12,658.99 L616.30,659.39 L618.48,659.78 L620.66,660.17 L622.84,660.56 L625.02,660.94 L627.19,661.31 L629.37,661.68 L631.55,662.05 L633.73,662.41 L635.91,662.76 L638.09,663.11 L640.27,663.46 L642.44,663.80 L644.62,664.13 L646.80,664.46 L648.98,664.79 L651.16,665.11 L653.34,665.43 L655.52,665.74 L657.70,666.04 L659.87,666.35 L662.05,666.64 L664.23,666.94 L666.41,667.22 L668.59,667.50 L670.77,667.78 L672.95,668.05 L675.12,668.32 L677.30,668.59 L679.48,668.84 L681.66,669.10 L683.84,669.35 L686.02,669.59 L688.20,669.83 L690.37,670.07 L692.55,670.30 L694.73,670.52 L696.91,670.74 L699.09,670.96 L701.27,671.17 L703.45,671.38 L705.63,671.58 L707.80,671.78 L709.98,671.97 L712.16,672.16 L714.34,672.35 L716.52,672.53 L718.70,672.71 L720.88,672.88 L723.05,673.04 L725.23,673.21 L727.41,673.36 L729.59,673.52 L731.77,673.67 L733.95,673.81 L736.13,673.95 L738.30,674.09 L740.48,674.22 L742.66,674.35 L744.84,674.47 L747.02,674.59 L749.20,674.71 L751.38,674.82 L753.56,674.93 L755.73,675.03 L757.91,675.13 L760.09,675.23 L762.27,675.32 L764.45,675.40 L766.63,675.49 L768.81,675.57 L770.98,675.64 L773.16,675.71 L775.34,675.78 L777.52,675.84 L779.70,675.90 L781.88,675.96 L784.06,676.01 L786.23,676.06 L788.41,676.11 L790.59,676.15 L792.77,676.19 L794.95,676.22 L797.13,676.25 L799.31,676.28 L801.48,676.30 L803.66,676.32 L805.84,676.34 L808.02,676.35 L810.20,676.36 L812.38,676.37 L814.56,676.37 L816.74,676.37 L818.91,676.37 L821.09,676.36 L823.27,676.35 L825.45,676.34 L827.63,676.33 L829.81,676.31 L831.99,676.29 L834.16,676.26 L836.34,676.23 L838.52,676.20 L840.70,676.17 L842.88,676.13 L845.06,676.10 L847.24,676.05 L849.41,676.01 L851.59,675.96 L853.77,675.91 L855.95,675.86 L858.13,675.81 L860.31,675.75 L862.49,675.69 L864.67,675.63 L866.84,675.56 L869.02,675.50 L871.20,675.43 L873.38,675.36 L875.56,675.28 L877.74,675.21 L879.92,675.13 L882.09,675.05 L884.27,674.97 L886.45,674.88 L888.63,674.80 L890.81,674.71 L892.99,674.62 L895.17,674.53 L897.34,674.44 L899.52,674.34 L901.70,674.24 L903.88,674.15 L906.06,674.05 L908.24,673.95 L910.42,673.84 L912.60,673.74 L914.77,673.64 L916.95,673.53 L919.13,673.42 L921.31,673.31 L923.49,673.20 L925.67,673.09 L927.85,672.98 L930.02,672.87 L932.20,672.75 L934.38,672.64 L936.56,672.52 L938.74,672.41 L940.92,672.29 L943.10,672.17 L945.27,672.05 L947.45,671.93 L949.63,671.81 L951.81,671.69 L953.99,671.57 L956.17,671.45 L958.35,671.33 L960.53,671.21 L962.70,671.09 L964.88,670.97 L967.06,670.85 L969.24,670.73 L971.42,670.60 L973.60,670.48 L975.78,670.36 L977.95,670.24 L980.13,670.12 L982.31,670.00 L984.49,669.88 L986.67,669.76 L988.85,669.64 L991.03,669.52 L993.20,669.40 L995.38,669.28 L997.56,669.17 L999.74,669.05 L1001.92,668.93 L1004.10,668.82 L1006.28,668.70 L1008.45,668.59 L1010.63,668.47 L1012.81,668.36 L1014.99,668.25 L1017.17,668.14 L1019.35,668.03 L1021.53,667.92 L1023.71,667.81 L1025.88,667.70 L1028.06,667.60 L1030.24,667.49 L1032.42,667.39 L1034.60,667.28 L1036.78,667.18 L1038.96,667.08 L1041.13,666.98 L1043.31,666.88 L1045.49,666.79 L1047.67,666.69 L1049.85,666.60 L1052.03,666.50 L1054.21,666.41 L1056.38,666.32 L1058.56,666.23 L1060.74,666.14 L1062.92,666.05 L1065.10,665.97 L1067.28,665.89 L1069.46,665.80 L1071.64,665.72 L1073.81,665.64 L1075.99,665.56 L1078.17,665.49 L1080.35,665.41 L1082.53,665.34 L1084.71,665.26 L1086.89,665.19 L1089.06,665.12 L1091.24,665.06 L1093.42,664.99 L1095.60,664.93 L1097.78,664.86 L1099.96,664.80 L1102.14,664.74 L1104.31,664.68 L1106.49,664.62 L1108.67,664.57 L1110.85,664.51 L1113.03,664.46 L1115.21,664.41 L1117.39,664.36 L1119.57,664.31 L1121.74,664.26 L1123.92,664.22 L1126.10,664.18 L1128.28,664.13 L1130.46,664.09 L1132.64,664.05 L1134.82,664.02 L1136.99,663.98 L1139.17,663.94 L1141.35,663.91 L1143.53,663.88 L1145.71,663.85 L1147.89,663.82 L1150.07,663.79 L1152.24,663.76 L1154.42,663.74 L1156.60,663.72 L1158.78,663.69 L1160.96,663.67 L1163.14,663.65 L1165.32,663.63 L1167.49,663.61 L1169.67,663.60 L1171.85,663.58 L1174.03,663.57 L1176.21,663.56 L1178.39,663.54 L1180.57,663.53 L1182.75,663.52 L1184.92,663.52 L1187.10,663.51 L1189.28,663.50 L1191.46,663.50 L1193.64,663.49 L1195.82,663.49 L1198.00,663.48 L1200.17,663.48 L1202.35,663.48 L1204.53,663.48 L1206.71,663.48 L1208.89,663.48 L1211.07,663.48 L1213.25,663.48 L1215.42,663.49 L1217.60,663.49 L1219.78,663.49 L1221.96,663.50 L1224.14,663.50 L1226.32,663.51 L1228.50,663.51 L1230.68,663.52 L1232.85,663.52 L1235.03,663.53 L1237.21,663.53 L1239.39,663.54 L1241.57,663.55 L1243.75,663.55 L1245.93,663.56 L1248.10,663.57 L1250.28,663.57 L1252.46,663.58 L1254.64,663.58 L1256.82,663.59 L1259.00,663.59 L1261.18,663.60 L1263.35,663.60 L1265.53,663.60 L1267.71,663.61 L1269.89,663.61 L1272.07,663.61 L1274.25,663.61 L1276.43,663.61 L1278.61,663.61 L1280.78,663.61 L1282.96,663.61 L1285.14,663.60 L1287.32,663.60 L1289.50,663.59 L1291.68,663.59 L1293.86,663.58 L1296.03,663.57 L1298.21,663.56 L1300.39,663.54 L1302.57,663.53 L1304.75,663.51 L1306.93,663.49 L1309.11,663.47 L1311.28,663.45 L1313.46,663.43 L1315.64,663.40 L1317.82,663.38 L1320.00,663.35 L1322.18,663.32 L1324.36,663.28 L1326.54,663.24 L1328.71,663.21 L1330.89,663.16 L1333.07,663.12 L1335.25,663.07 L1337.43,663.02 L1339.61,662.97 L1341.79,662.92 L1343.96,662.86 L1346.14,662.79 L1348.32,662.73 L1350.50,662.66" stroke="#000" stroke-width="1" fill="none"/>
<rect x="44.5" y="90.5" width="1306.0" height="166.0" fill="none" stroke="#000" stroke-width="1.3"/>
<rect x="44.5" y="307.5" width="1306.0" height="166.0" fill="none" stroke="#000" stroke-width="1.3"/>
<rect x="44.5" y="524.5" width="1306.0" height="166.0" fill="none" stroke="#000" stroke-width="1.3"/>
</svg>
<div class="yl" style="top:85.7px">1</div>
<div class="yl" style="top:113.4px">0.8</div>
<div class="yl" style="top:141.0px">0.6</div>
<div class="yl" style="top:168.7px">0.4</div>
<div class="yl" style="top:196.4px">0.2</div>
<div class="yl" style="top:224.0px">0</div>
<div class="yl" style="top:251.7px">-0.2</div>
<div class="yl" style="top:302.7px">1</div>
<div class="yl" style="top:344.2px">0.5</div>
<div class="yl" style="top:385.7px">0</div>
<div class="yl" style="top:427.2px">-0.5</div>
<div class="yl" style="top:468.7px">-1</div>
<div class="yl" style="top:519.7px">100</div>
<div class="yl" style="top:547.4px">80</div>
<div class="yl" style="top:575.0px">60</div>
<div class="yl" style="top:602.7px">40</div>
<div class="yl" style="top:630.4px">20</div>
<div class="yl" style="top:658.0px">0</div>
<div class="yl" style="top:685.7px">-20</div>
<div class="xl" style="left:30.5px;top:263.0px">0</div>
<div class="xl" style="left:291.5px;top:263.0px">50</div>
<div class="xl" style="left:552.5px;top:263.0px">100</div>
<div class="xl" style="left:813.5px;top:263.0px">150</div>
<div class="xl" style="left:1074.5px;top:263.0px">200</div>
<div class="xl" style="left:1335.5px;top:263.0px">250</div>
<div class="xl" style="left:30.5px;top:480.0px">0</div>
<div class="xl" style="left:291.5px;top:480.0px">50</div>
<div class="xl" style="left:552.5px;top:480.0px">100</div>
<div class="xl" style="left:813.5px;top:480.0px">150</div>
<div class="xl" style="left:1074.5px;top:480.0px">200</div>
<div class="xl" style="left:1335.5px;top:480.0px">250</div>
<div class="xl" style="left:30.5px;top:697.0px">0</div>
<div class="xl" style="left:291.5px;top:697.0px">50</div>
<div class="xl" style="left:552.5px;top:697.0px">100</div>
<div class="xl" style="left:813.5px;top:697.0px">150</div>
<div class="xl" style="left:1074.5px;top:697.0px">200</div>
<div class="xl" style="left:1335.5px;top:697.0px">250</div>
<div class="abs" id="toffset">Time offset:</div><div class="abs" id="toff0">0</div><div class="abs" style="left:7px;top:721px;width:1px;height:7px;background:#3b2a22"></div>
<div class="abs" id="taskbar"></div>
<!-- title icon -->
<svg class="abs" style="left:17px;top:10px" width="16" height="16" viewBox="0 0 16 16">
 <defs><linearGradient id="tig" x1="0" y1="0" x2="1" y2="1"><stop offset="0" stop-color="#fdfdfd"/><stop offset="1" stop-color="#d8d8d8"/></linearGradient></defs>
 <rect x="0.5" y="0.5" width="15" height="15" rx="1" fill="url(#tig)" stroke="#9aa0a6"/>
 <rect x="1" y="1" width="14" height="1.6" fill="#8fb8dc"/>
 <defs><linearGradient id="mlo2" x1="0" y1="0" x2="1" y2="0"><stop offset="0" stop-color="#8a1a10"/><stop offset="0.45" stop-color="#e0702a"/><stop offset="0.6" stop-color="#f2b838"/><stop offset="0.75" stop-color="#e05a20"/><stop offset="1" stop-color="#b82015"/></linearGradient></defs>
 <g transform="translate(2,4) scale(0.5) translate(-473.7,-736.8)">
 <path d="M473.7,749.2 Q476.5,746.8 480.5,745.5 L487.6,737.9 L489.3,737 L484.5,745 L481.8,752.6 L478.6,752.3 Z" fill="#3d9be0"/>
 <path d="M480.5,745.8 L484.8,742.5 L482.5,749 Z" fill="#6a2030"/>
 <path d="M489.3,736.8 L496.5,754.5 L490.7,751.9 L483.9,758.3 L480.5,752.3 Q484,747 489.3,736.8 Z" fill="url(#mlo2)"/>
 <path d="M480.5,752.3 L483.9,758.3 L486.5,755.5 L483.5,752.5 Z" fill="#f4b030"/>
 </g>
</svg>
<!-- window controls -->
<div class="abs" style="left:1256px;top:18px;width:10px;height:1px;background:#000"></div>
<div class="abs" style="left:1301px;top:13px;width:10px;height:10px;border:1px solid #000"></div>
<svg class="abs" style="left:1346px;top:12px" width="12" height="12" viewBox="0 0 12 12"><path d="M1,1 L11,11 M11,1 L1,11" stroke="#000" stroke-width="1.05"/></svg>

<!-- toolbar separators -->
<div class="abs" style="left:58px;top:36px;width:1px;height:21px;background:#a0a0a0"></div>
<div class="abs" style="left:135px;top:36px;width:1px;height:21px;background:#a0a0a0"></div>
<div class="abs" style="left:212px;top:36px;width:1px;height:21px;background:#a0a0a0"></div>
<div class="abs" style="left:289px;top:36px;width:1px;height:21px;background:#a0a0a0"></div>
<!-- selected zoom button -->
<div class="abs" style="left:63px;top:34px;width:23px;height:22px;background:#c6def4;border:1px solid #99ccf7"></div>

<!-- printer -->
<svg class="abs" style="left:11px;top:37px" width="18" height="17" viewBox="0 0 18 17">
 <defs>
  <linearGradient id="pb" x1="0" y1="0" x2="0" y2="1"><stop offset="0" stop-color="#f2f2f2"/><stop offset="1" stop-color="#bdbdbd"/></linearGradient>
  <linearGradient id="pt" x1="0" y1="0" x2="0" y2="1"><stop offset="0" stop-color="#cfe0ee"/><stop offset="1" stop-color="#ffffff"/></linearGradient>
 </defs>
 <rect x="4.5" y="1.5" width="9" height="4" fill="#fff" stroke="#6d8fae"/>
 <rect x="1.5" y="5.5" width="15" height="7.5" rx="1.2" fill="url(#pb)" stroke="#4a4a4a"/>
 <rect x="3" y="7.3" width="12" height="2" fill="#9a9a9a"/>
 <rect x="3" y="10.6" width="12" height="5.2" fill="url(#pt)"/><rect x="3" y="10.2" width="12" height="1.2" fill="#3e6690"/><rect x="2.2" y="15.1" width="13.6" height="1.2" fill="#4e77a0"/>
</svg>
<!-- gear -->
<svg class="abs" style="left:35px;top:37px" width="16" height="16" viewBox="0 0 16 16">
 <defs><radialGradient id="gg" cx="0.4" cy="0.35" r="0.7"><stop offset="0" stop-color="#fafafa"/><stop offset="1" stop-color="#c4c4c4"/></radialGradient></defs>
 <g transform="translate(8,7.8)">
  <path d="M-1.46,-4.78 L-1.28,-6.58 L1.28,-6.58 L1.46,-4.78 L2.35,-4.41 L3.75,-5.55 L5.55,-3.75 L4.41,-2.35 L4.78,-1.46 L6.58,-1.28 L6.58,1.28 L4.78,1.46 L4.41,2.35 L5.55,3.75 L3.75,5.55 L2.35,4.41 L1.46,4.78 L1.28,6.58 L-1.28,6.58 L-1.46,4.78 L-2.35,4.41 L-3.75,5.55 L-5.55,3.75 L-4.41,2.35 L-4.78,1.46 L-6.58,1.28 L-6.58,-1.28 L-4.78,-1.46 L-4.41,-2.35 L-5.55,-3.75 L-3.75,-5.55 L-2.35,-4.41 Z" fill="url(#gg)" stroke="#1e1e1e" stroke-width="1.1" stroke-linejoin="round"/>
  <circle r="2.8" fill="none" stroke="#1e1e1e" stroke-width="1.4"/>
  <circle r="2" fill="#f6f6f6"/>
 </g>
</svg>
<!-- zoom in -->
<svg class="abs" style="left:65px;top:37px" width="18" height="17" viewBox="0 0 18 17">
 <circle cx="7.4" cy="6.3" r="5" fill="#e8f0f8" stroke="#3a3a3a" stroke-width="1.1"/>
 <path d="M7.4,3.6 V9 M4.7,6.3 H10.1" stroke="#000" stroke-width="1.4"/>
 <path d="M11,10 L15,14" stroke="#333" stroke-width="1.9" stroke-linecap="round"/>
</svg>
<!-- zoom x -->
<svg class="abs" style="left:89px;top:38px" width="17" height="14" viewBox="0 0 17 14">
 <circle cx="8.4" cy="5.3" r="3.2" fill="#e3edf5" stroke="#333" stroke-width="1"/>
 <path d="M10.6,7.6 L13,10.8" stroke="#333" stroke-width="1.4" stroke-linecap="round"/>
 <path d="M1.2,3 V7.5 M15.5,3 V7.5" stroke="#000" stroke-width="1.2"/>
 <path d="M3,4.5 V6 M13.7,4.5 V6" stroke="#000" stroke-width="1"/>
</svg>
<!-- zoom y -->
<svg class="abs" style="left:115px;top:36px" width="14" height="18" viewBox="0 0 14 18">
 <circle cx="5.6" cy="8.8" r="3.2" fill="#e3edf5" stroke="#333" stroke-width="1"/>
 <path d="M7.9,11 L11,13" stroke="#333" stroke-width="1.4" stroke-linecap="round"/>
 <path d="M3,1.3 H8.3 M3,15.5 H8.3" stroke="#000" stroke-width="1.2"/>
 <path d="M4.8,3.2 H6.5 M4.8,13.6 H6.5" stroke="#000" stroke-width="1"/>
</svg>
<!-- fit -->
<svg class="abs" style="left:142px;top:36px" width="18" height="18" viewBox="0 0 18 18">
 <defs><linearGradient id="fg" x1="0" y1="0" x2="1" y2="1"><stop offset="0" stop-color="#fff"/><stop offset="1" stop-color="#cfcfcf"/></linearGradient></defs>
 <rect x="1.5" y="1.5" width="15" height="15" fill="url(#fg)" stroke="#333" stroke-width="1.3"/>
 <path d="M3.8,3.8 L7,7 M3.8,6.6 V3.8 H6.6 M14.2,3.8 L11,7 M11.4,3.8 H14.2 V6.6 M3.8,14.2 L7,11 M3.8,11.4 V14.2 H6.6 M14.2,14.2 L11,11 M11.4,14.2 H14.2 V11.4" stroke="#1a1a1a" stroke-width="1.05" fill="none"/>
</svg>
<!-- save red -->
<svg class="abs" style="left:165px;top:36px" width="18" height="18" viewBox="0 0 18 18">
 <path d="M1.5,1.8 H17 M1.5,1.5 V15" stroke="#222" stroke-width="1.2"/>
 <path d="M4,1.5 V2.8 M6.3,1.5 V2.8 M8.6,1.5 V2.8 M10.9,1.5 V2.8 M13.2,1.5 V2.8 M15.6,1.5 V2.8 M1.5,4.5 H2.8 M1.5,7 H2.8 M1.5,9.5 H2.8 M1.5,12 H2.8" stroke="#222" stroke-width="0.9"/>
 <rect x="9" y="9" width="8" height="8" fill="#4a4a4a"/>
 <rect x="10" y="10" width="6" height="2.8" fill="#9d9d9d"/>
 <rect x="11" y="14" width="1.3" height="2" fill="#fff"/><rect x="13.3" y="14" width="1.8" height="2" fill="#fff"/>
 <path d="M2.3,4.3 L4.3,2.3 L9.5,7.2 L10.3,4.8 L10.3,11.3 L3.8,11.3 L6.3,10.5 Z" fill="#d9262e" stroke="#a10a0a" stroke-width="0.5"/>
 <path d="M3.6,4.3 L4.4,3.6 L8,7.3 L7.2,8 Z" fill="#f4a0a0"/>
</svg>
<!-- save green -->
<svg class="abs" style="left:188px;top:36px" width="18" height="18" viewBox="0 0 18 18">
 <path d="M1.5,1.8 H17 M1.5,1.5 V15" stroke="#222" stroke-width="1.2"/>
 <path d="M4,1.5 V2.8 M6.3,1.5 V2.8 M8.6,1.5 V2.8 M10.9,1.5 V2.8 M13.2,1.5 V2.8 M15.6,1.5 V2.8 M1.5,4.5 H2.8 M1.5,7 H2.8 M1.5,9.5 H2.8 M1.5,12 H2.8" stroke="#222" stroke-width="0.9"/>
 <rect x="9" y="9" width="8" height="8" fill="#4a4a4a"/>
 <rect x="10" y="10" width="6" height="2.8" fill="#9d9d9d"/>
 <rect x="11" y="14" width="1.3" height="2" fill="#fff"/><rect x="13.3" y="14" width="1.8" height="2" fill="#fff"/>
 <path d="M2.5,10.5 L3,3 L10,3.2 L7.8,5.2 L12,9.5 L9.8,11.6 L5.6,7.4 Z" fill="#6cb42c" stroke="#2e7a12" stroke-width="0.6"/>
 <path d="M4.5,4.5 L7.5,4.6 L6.2,5.8 Z" fill="#c9ec90"/>
</svg>
<!-- monitor -->
<svg class="abs" style="left:220px;top:36px" width="16" height="18" viewBox="0 0 16 18">
 <defs><linearGradient id="mg" x1="0" y1="0" x2="0" y2="1"><stop offset="0.6" stop-color="#fff"/><stop offset="1" stop-color="#d0d0d0"/></linearGradient></defs>
 <rect x="1.5" y="1.5" width="12.5" height="13.3" fill="url(#mg)" stroke="#111" stroke-width="1.1"/>
 <rect x="3.6" y="3.6" width="8.3" height="6.2" fill="#fff" stroke="#1a74c9" stroke-width="1.1"/>
 <path d="M4.3,14.8 V16.8 M6.3,14.8 V16.8 M8.2,14.8 V16.8 M10.2,14.8 V16.8" stroke="#111" stroke-width="0.9"/>
</svg>
<!-- lock -->
<svg class="abs" style="left:244px;top:36px" width="13" height="18" viewBox="0 0 13 18">
 <path d="M3.8,7.5 V4 Q3.8,1.6 6.4,1.6 Q9,1.6 9,4 V7.5" fill="none" stroke="#8c8c8c" stroke-width="1.3"/>
 <rect x="1" y="7.3" width="10.8" height="9.5" fill="#999" stroke="#888" stroke-width="0.6"/>
 <path d="M6.4,10 V14" stroke="#777" stroke-width="0.8"/>
</svg>
<!-- cursor -->
<svg class="abs" style="left:265px;top:36px" width="18" height="18" viewBox="0 0 18 18">
 <path d="M7.4,1.9 H15 M1,5.7 H15 M8,1.5 V10.7 M7.4,10.4 H9" stroke="#8a8a8a" stroke-width="1.3" fill="none"/>
 <path d="M9,6.5 L9,16 L11,13.8 L13,17.3 L14.5,16.5 L12.6,13.2 L15.5,12.8 Z" fill="#999" stroke="#8a8a8a" stroke-width="0.6"/>
</svg>
<!-- sine/legend -->
<svg class="abs" style="left:293px;top:36px" width="25" height="18" viewBox="0 0 25 18">
 <rect x="1" y="1" width="23" height="16" fill="#d8d8d8"/>
 <rect x="1" y="1" width="23" height="1.2" fill="#aaa"/>
 <rect x="1" y="15.8" width="23" height="1.2" fill="#a5a5a5"/>
 <rect x="1.8" y="2.8" width="11.5" height="12.2" fill="#fff"/>
 <path d="M2,8.5 Q3.3,4 5,5.3 Q6.7,6.5 7.5,10 Q8.5,13.6 10.5,12.7 Q12,12 12.5,9.5" fill="none" stroke="#2b5b92" stroke-width="1.3"/>
 <rect x="15" y="2.8" width="9" height="12" fill="#8a8a8a"/>
 <rect x="15" y="2.8" width="9" height="1.2" fill="#3a5f8a"/>
 <path d="M16.5,6 H22.7 M16.5,9 H22.7 M16.5,12 H22.7" stroke="#f0f0f0" stroke-width="1"/>
</svg>
<!-- toolbar right glyph -->
<svg class="abs" style="left:1362px;top:42px" width="4" height="8" viewBox="0 0 4 8"><path d="M1,3.5 L3,2 M3,6 H4" stroke="#000" stroke-width="1"/></svg>
<!-- start -->
<svg class="abs" style="left:0;top:728px" width="1366" height="40" viewBox="0 728 1366 40">
 <g fill="#fff">
  <path d="M15.9,741.9 L22.1,741.1 L22.1,747 L15.9,747 Z"/>
  <path d="M23,740.9 L32.1,739.9 L32.1,747 L23,747 Z"/>
  <path d="M15.9,747.9 L22.1,747.9 L22.1,755 L15.9,754.1 Z"/>
  <path d="M23,747.9 L32.1,747.9 L32.1,756.1 L23,755.1 Z"/>
 </g>
 <!-- search -->
 <circle cx="74.3" cy="745.4" r="4.9" fill="none" stroke="#fff" stroke-width="1.1"/>
 <path d="M70.8,748.9 L64.6,755.6" stroke="#fff" stroke-width="1.2" stroke-linecap="round"/>
 <!-- task view -->
 <path d="M112.5,739.5 V741.5 H122.5 V739.5 M112.5,755.5 V752.5 H122.5 V755.5 M126.5,739.5 V755.5" fill="none" stroke="#fff" stroke-width="1"/>
 <rect x="112.5" y="744.5" width="10" height="6" fill="none" stroke="#fff" stroke-width="1"/>
 <rect x="125" y="744" width="3" height="3" fill="#fff"/>
 <!-- separators -->
 <path d="M150.5,740 V756 M153.5,740 V756" stroke="#777" stroke-width="0.9"/>
 <!-- underlines -->
 <g fill="#aaf7d4">
  <rect x="171" y="766" width="40" height="2"/>
  <rect x="220" y="766" width="40" height="2"/>
  <rect x="269" y="766" width="40" height="2"/>
  <rect x="318" y="766" width="40" height="2"/>
  <rect x="367" y="766" width="31" height="2"/>
  <rect x="416" y="766" width="40" height="2"/>
 </g>
 <rect x="398" y="766" width="9" height="2" fill="#8cc9ac"/>
 <!-- active matlab bg -->
 <rect x="461" y="728" width="48" height="40" fill="#5b5d5f"/>
 <rect x="505" y="728" width="1" height="40" fill="#3e4042"/>
 <rect x="461" y="766" width="44" height="2" fill="#aaf7d4"/>
 <rect x="506" y="766" width="4" height="2" fill="#8cc9ac"/>

 <!-- folder -->
 <path d="M180.4,740.5 Q180.4,739 182,739 L188.5,739 L190,740.6 L200,740.6 Q201.5,740.6 201.5,742 L201.5,755 Q201.5,756.1 200.3,756.1 L181.6,756.1 Q180.1,756.1 180.1,755 Z" fill="#fde38c"/>
 <path d="M180.4,740.6 Q180.4,739 182,739 L188.5,739 L190.2,741.2 L180.4,741.2 Z" fill="#f2c135"/>
 <rect x="181.3" y="739.6" width="3" height="0.8" fill="#bfe3f0"/>
 <path d="M184.2,757 V750 Q184.2,748.8 185.4,748.8 L196.8,748.8 Q198,748.8 198,750 V757 H194 V752 H188.2 V757 Z" fill="#2db5ef"/>

 <!-- word -->
 <path d="M228.7,738.9 L241.9,736.8 L241.9,759 L228.7,756.7 Z" fill="#2b579a"/>
 <rect x="241.9" y="738.9" width="9.1" height="17.8" fill="#fff" stroke="#2b579a" stroke-width="0.9"/>
 <path d="M243,742.4 H249.5 M243,744.6 H249.5 M243,746.8 H249.5 M243,749 H249.5 M243,751.2 H249.5 M243,753.4 H249.5" stroke="#2b579a" stroke-width="0.9"/>
 <path d="M230.3,744.6 L232.2,751.5 L234.2,745.5 L236.2,751.5 L238.2,744.6" fill="none" stroke="#fff" stroke-width="1.5" stroke-linejoin="bevel"/>

 <!-- chrome -->
 <g transform="translate(289,747.9)">
  <circle r="11" fill="#db4437"/>
  <path d="M0,0 L9.53,5.5 A11,11 0 0 1 -1.5,10.9 Z M0,0" fill="#fcc934"/>
  <path d="M9.53,-5.5 A11,11 0 0 1 0.5,11 L4.7,2 Z" fill="#fcc934"/>
  <path d="M0,0 L-9.53,-5.5 A11,11 0 0 0 -1.5,10.9 L3.5,2 Z" fill="#1e9e57"/>
  <path d="M-9.53,-5.5 L-5,2.9 L0,0 Z" fill="#1e9e57"/>
  <circle r="4.9" fill="#fff"/>
  <circle r="3.9" fill="#4a89f3"/>
 </g>

 <!-- perf monitor -->
 <path d="M327,741.5 L332,740 L332,755 L327,755.5 Z" fill="#cfcfcf"/>
 <rect x="327.5" y="742.5" width="2" height="1.5" fill="#6ac33a"/>
 <rect x="331" y="738.5" width="17.5" height="15" rx="1" fill="#e6e6e6" stroke="#b5b5b5" stroke-width="0.8"/>
 <rect x="333" y="740.5" width="13.5" height="10.5" fill="#eaf4fb"/>
 <path d="M333,747 L335,746 L336.5,743 L338,748 L340,747.5 L341.5,748.5 L343,745.5 L344,748 L346.5,747.5" fill="none" stroke="#3c8ccc" stroke-width="0.9"/>
 <ellipse cx="339.5" cy="757" rx="5" ry="2" fill="#d9d9d9"/>
 <rect x="338" y="753.5" width="3" height="3" fill="#c8c8c8"/>

 <!-- acrobat -->
 <defs><linearGradient id="acg" x1="0" y1="0" x2="0" y2="1"><stop offset="0" stop-color="#f20a0a"/><stop offset="1" stop-color="#9c0000"/></linearGradient>
 <linearGradient id="mlg" x1="0" y1="0" x2="1" y2="1"><stop offset="0" stop-color="#f6c030"/><stop offset="0.5" stop-color="#e06020"/><stop offset="1" stop-color="#a02010"/></linearGradient></defs>
 <rect x="376.1" y="736.9" width="21.1" height="20.2" fill="url(#acg)"/>
 <path d="M380,753 Q382,748 385.5,742 Q386.5,739.5 386,741.5 Q385.8,745 388.5,748.5 Q391,750.5 393.5,751 Q391.5,752 388,749 Q384.5,749.5 381.5,752.5 Q379.5,754 380,753 Z" fill="none" stroke="#fff" stroke-width="0.9"/>

 <!-- clapper -->
 <path d="M424.8,739.5 L446,736 L446.8,740.2 L425.5,742.7 Z" fill="#fff"/>
 <path d="M428.5,739 L431.8,738.4 L433.5,742 L430.2,742.4 Z M434.8,738 L438,737.5 L439.7,741.3 L436.5,741.6 Z M441.2,737 L444.4,736.5 L446,740.4 L442.8,740.8 Z" fill="#2e3235"/>
 <rect x="424.8" y="744.8" width="22.1" height="14.3" rx="1.6" fill="#fff"/>

 <!-- matlab logo -->
 <defs>
  <linearGradient id="mlo" x1="0" y1="0" x2="1" y2="0"><stop offset="0" stop-color="#8a1a10"/><stop offset="0.45" stop-color="#e0702a"/><stop offset="0.6" stop-color="#f2b838"/><stop offset="0.75" stop-color="#e05a20"/><stop offset="1" stop-color="#b82015"/></linearGradient>
 </defs>
 <path d="M473.7,749.2 Q476.5,746.8 480.5,745.5 L487.6,737.9 L489.3,737 L484.5,745 L481.8,752.6 L478.6,752.3 Z" fill="#3d9be0"/>
 <path d="M480.5,745.8 L484.8,742.5 L482.5,749 Z" fill="#6a2030"/>
 <path d="M489.3,736.8 L496.5,754.5 L490.7,751.9 L483.9,758.3 L480.5,752.3 Q484,747 489.3,736.8 Z" fill="url(#mlo)"/>
 <path d="M480.5,752.3 L483.9,758.3 L486.5,755.5 L483.5,752.5 Z" fill="#f4b030"/>
<!-- help -->
 <circle cx="1047.3" cy="749.4" r="10" fill="#0a97dd" stroke="#fff" stroke-width="1.3"/>
 <path d="M1043.9,745.7 Q1044.2,742.3 1047.4,742.3 Q1050.8,742.3 1050.8,745.3 Q1050.8,747.2 1048.5,748.5 Q1047.3,749.3 1047.3,751.5" fill="none" stroke="#fff" stroke-width="2"/>
 <circle cx="1047.3" cy="754.3" r="1.2" fill="#fff"/>
 <circle cx="1055.5" cy="753.5" r="4.7" fill="#f0aa1a"/>
 <rect x="1054.8" y="750.8" width="1.5" height="5.8" fill="#fff"/>
 <!-- people -->
 <g fill="none" stroke="#fff" stroke-width="1.05">
  <circle cx="1094" cy="742.5" r="2.7"/>
  <path d="M1091.8,746.9 Q1094,745.3 1096.2,746.4 Q1097.8,747.3 1098,748.8"/>
  <circle cx="1088" cy="748.5" r="2.7"/>
  <path d="M1084.5,755 Q1084.8,751.4 1088,751.4 Q1091.2,751.4 1091.5,755"/>
 </g>
 <!-- chevron -->
 <path d="M1121.3,750.6 L1127.1,744.8 L1132.8,750.6" fill="none" stroke="#fff" stroke-width="1.05"/>
 <!-- power -->
 <g fill="none" stroke="#fff" stroke-width="1">
  <path d="M1143.5,741.8 V744.2 M1146.5,741.8 V744.2 M1142.8,744.3 H1147.2 V746 Q1147.2,748.3 1145,748.3 Q1142.8,748.3 1142.8,746 Z M1145,748.3 V752.8"/>
  <rect x="1147.6" y="744.4" width="10.5" height="8"/>
 </g>
 <rect x="1148.5" y="745.6" width="8" height="5.6" fill="#fff"/>
 <rect x="1158.2" y="747" width="1.3" height="3" fill="#fff"/>
 <!-- network -->
 <g fill="none" stroke="#fff" stroke-width="1">
  <path d="M1170.5,742.8 H1182.5 V751.8 H1170.5 M1167.5,742.8 H1170.5 V746.6 H1167.5 Z M1169,746.6 V754.5 M1175.5,751.8 V753.8 M1173,754 H1179"/>
 </g>
 <!-- volume -->
 <g fill="none" stroke="#fff" stroke-width="1">
  <path d="M1191.6,745.2 H1193.8 L1197,742.2 V753.6 L1193.8,750.8 H1191.6 Z"/>
  <path d="M1199.2,745.6 A3.2,3.2 0 0 1 1199.2,750.4"/>
  <path d="M1201.6,743.6 A5.8,5.8 0 0 1 1201.6,752.4" stroke="#d0d0d0"/>
 </g>
 <path d="M1204.2,741.4 A8.5,8.5 0 0 1 1204.2,754.6" fill="none" stroke="#8a8a8a" stroke-width="1"/>
 <!-- notification -->
 <path d="M1324.8,739.8 H1341.2 V753 H1334 L1331.4,755.3 L1330.8,753 H1324.8 Z" fill="#fff"/>
 <path d="M1328.2,743.5 H1337.8 M1328.2,746.4 H1337.8 M1328.2,749.4 H1333.7" stroke="#2e3235" stroke-width="0.9"/>
 <circle cx="1340.8" cy="755.3" r="7.8" fill="#2b2d2f" stroke="#8f8f8f" stroke-width="0.9"/>
 <path d="M1339,751.5 L1341.3,750 V759.6" fill="none" stroke="#fff" stroke-width="1.5"/>
 <rect x="1361" y="728" width="1" height="40" fill="#8a8a8a"/>
</svg>
<div class="tbtxt" style="left:1218.3px;top:741.1px;font-size:12.6px;transform:scaleX(0.88);transform-origin:0 0">РУС</div>
<div class="tbtxt" style="left:1266.6px;top:732.2px;font-size:12px;transform:scaleX(0.87);transform-origin:0 0">19:34</div>
<div class="tbtxt" style="left:1252.8px;top:750.2px;font-size:12px;transform:scaleX(0.92);transform-origin:0 0">09.05.2019</div>

</body></html>
